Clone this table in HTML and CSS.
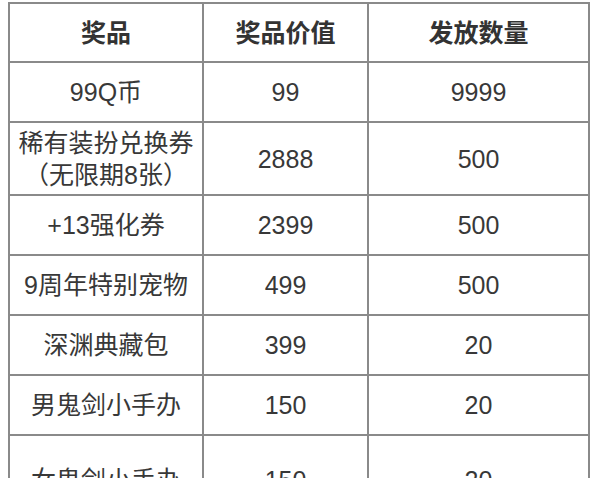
FILE: index.html
```html
<!DOCTYPE html>
<html lang="zh-CN">
<head>
<meta charset="utf-8">
<title>奖品</title>
<link rel="stylesheet" href="styles.css">
</head>
<body>
<table class="prize-table">
  <colgroup>
    <col class="c1">
    <col class="c2">
    <col class="c3">
  </colgroup>
  <thead>
    <tr class="row-head"><th>奖品</th><th>奖品价值</th><th>发放数量</th></tr>
  </thead>
  <tbody>
    <tr><td>99Q币</td><td>99</td><td>9999</td></tr>
    <tr class="row-tall"><td>稀有装扮兑换券<br>（无限期8张）</td><td>2888</td><td>500</td></tr>
    <tr><td>+13强化券</td><td>2399</td><td>500</td></tr>
    <tr><td>9周年特别宠物</td><td>499</td><td>500</td></tr>
    <tr><td>深渊典藏包</td><td>399</td><td>20</td></tr>
    <tr><td>男鬼剑小手办</td><td>150</td><td>20</td></tr>
    <tr class="row-last"><td>女鬼剑小手办</td><td>150</td><td>20</td></tr>
  </tbody>
</table>
</body>
</html>
```
FILE: styles.css
```css
html, body {
  background: #ffffff;
}
body {
  margin: 2px 0 0 8px;
  font-family: "Liberation Sans", "Noto Sans CJK SC", sans-serif;
  color: #383838;
}
.prize-table {
  border-collapse: collapse;
  table-layout: fixed;
  width: 580px;
  font-size: 25px;
  line-height: 32px;
}
.c1 { width: 194px; }
.c2 { width: 165px; }
.c3 { width: 221px; }
.prize-table th,
.prize-table td {
  border: 2px solid #8a8a8a;
  padding: 0;
  text-align: center;
  vertical-align: middle;
  height: 58px;
}
.prize-table th {
  font-weight: bold;
  color: #333333;
}
.row-head th { height: 57px; }
.row-tall td { height: 71px; }
.row-last td { height: 88px; }
```
